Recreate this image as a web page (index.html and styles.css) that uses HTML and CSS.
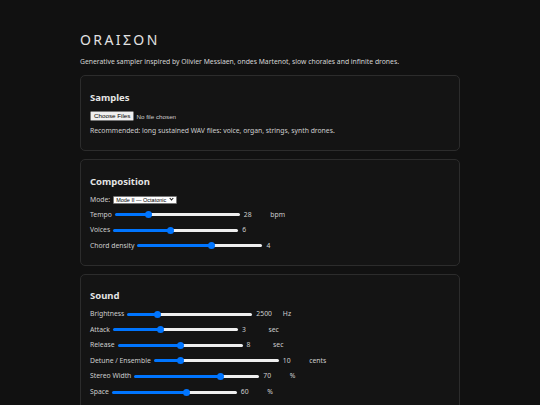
FILE: index.html
```html
<!DOCTYPE html>
<html>
    <head>
        <meta charset="utf-8">
        <title>Oraison</title>
        <link rel="stylesheet" href="styles.css">
    </head>
    <body>
        <div id="main-cont">
            <h1 id="title">ORAIΣON</h1>
            <p class="lead">Generative sampler inspired by Olivier Messiaen, ondes Martenot, slow chorales and infinite drones.</p>

            <div class="card">
                <h2>Samples</h2>
                <div class="rows samples">
                    <input type="file" id="files" multiple accept=".wav">
                    <p class="text">Recommended: long sustained WAV files: voice, organ, strings, synth drones.</p>
                </div>
            </div>

            <div class="card">
                <h2>Composition</h2>
                <div class="rows">
                    <div class="row">
                        <label for="mode">Mode:</label>
                        <span class="select">
                            <select id="mode">
                                <option>Mode II — Octatonic</option>
                                <option>Mode III</option>
                                <option>Mode VII</option>
                            </select>
                        </span>
                    </div>
                    <div class="row">
                        <label>Tempo</label>
                        <input type="range" min="10" max="80" value="28" style="--p: 27.1%">
                        <span class="val">28</span>
                        <span class="unit">bpm</span>
                    </div>
                    <div class="row">
                        <label>Voices</label>
                        <input type="range" min="1" max="12" value="6" style="--p: 45.7%">
                        <span class="val">6</span>
                    </div>
                    <div class="row">
                        <label>Chord density</label>
                        <input type="range" min="1" max="6" value="4" style="--p: 59.4%">
                        <span class="val">4</span>
                    </div>
                </div>
            </div>

            <div class="card">
                <h2>Sound</h2>
                <div class="rows sound">
                    <div class="row">
                        <label>Brightness</label>
                        <input type="range" min="500" max="9500" value="2500" style="--p: 23.8%">
                        <span class="val">2500</span>
                        <span class="unit">Hz</span>
                    </div>
                    <div class="row">
                        <label>Attack</label>
                        <input type="range" min="0" max="8" value="3" style="--p: 38.2%">
                        <span class="val">3</span>
                        <span class="unit">sec</span>
                    </div>
                    <div class="row">
                        <label>Release</label>
                        <input type="range" min="0" max="16" value="8" style="--p: 50%">
                        <span class="val">8</span>
                        <span class="unit">sec</span>
                    </div>
                    <div class="row">
                        <label>Detune / Ensemble</label>
                        <input type="range" min="0" max="50" value="10" style="--p: 21.7%">
                        <span class="val">10</span>
                        <span class="unit">cents</span>
                    </div>
                    <div class="row">
                        <label>Stereo Width</label>
                        <input type="range" min="0" max="100" value="70" style="--p: 68.9%">
                        <span class="val">70</span>
                        <span class="unit">%</span>
                    </div>
                    <div class="row">
                        <label>Space</label>
                        <input type="range" min="0" max="100" value="60" style="--p: 59.4%">
                        <span class="val">60</span>
                        <span class="unit">%</span>
                    </div>
                </div>
            </div>
        </div>
    </body>
</html>
```

FILE: styles.css
```css
body {
    background-color: #111111;
    margin: 0px;
    padding: 0px;
    color: #cfcfcf;
    font-family: "Noto Sans", "Open Sans", sans-serif;
}
#main-cont {
    width: 380px;
    margin: 0px auto;
    padding-top: 30px;
}
#title {
    margin: 0px;
    font-family: "Noto Sans", "Open Sans", sans-serif;
    font-size: 14px;
    line-height: 20px;
    font-weight: 400;
    letter-spacing: 2.4px;
    color: #e2e2e2;
}
.lead {
    margin: 7px 0px 8px;
    font-size: 6.8px;
    line-height: 10px;
    color: #d6d6d6;
}
.card {
    border: solid 1px #2c2c2c;
    border-radius: 5px;
    background-color: #141414;
    padding: 14.5px 9px 14px;
    margin-bottom: 8px;
}
h2 {
    margin: 0px 0px 7px;
    font-size: 9.5px;
    line-height: 13px;
    font-weight: bold;
    color: #e4e4e4;
}
.rows {
    display: flex;
    flex-direction: column;
    align-items: flex-start;
    gap: 5.3px;
}
.samples {
    gap: 5.7px;
}
.sound {
    gap: 5.6px;
}
.text {
    margin: 0px;
    font-size: 6.8px;
    line-height: 10px;
}
.row {
    display: flex;
    align-items: center;
    height: 10px;
    font-size: 6.8px;
    line-height: 10px;
}
#files {
    zoom: 0.5;
    font-family: "Liberation Sans", sans-serif;
    font-size: 12.5px;
    color: #d0d0d0;
}
.select {
    position: relative;
    display: inline-flex;
    margin-left: 3px;
}
.select::after {
    content: "";
    position: absolute;
    right: 4px;
    top: 1.5px;
    width: 2px;
    height: 2px;
    border-right: solid 1px #111;
    border-bottom: solid 1px #111;
    transform: rotate(45deg);
    pointer-events: none;
}
#mode {
    -webkit-appearance: none;
    appearance: none;
    width: 64px;
    height: 8px;
    padding: 0px 0px 0px 2px;
    border: solid 1px #767676;
    border-radius: 1px;
    background-color: #ffffff;
    color: #000000;
    font-family: "Liberation Sans", sans-serif;
    font-size: 5.5px;
    line-height: 6px;
}
input[type=range] {
    -webkit-appearance: none;
    appearance: none;
    width: 125px;
    height: 8px;
    margin: 0px 4px 0px 3px;
    background: transparent;
}
input[type=range]::-webkit-slider-runnable-track {
    height: 3px;
    border-radius: 2px;
    background: linear-gradient(to right, #0075ff var(--p), #efefef var(--p));
}
input[type=range]::-webkit-slider-thumb {
    -webkit-appearance: none;
    width: 7px;
    height: 7px;
    margin-top: -2px;
    border-radius: 50%;
    background-color: #0075ff;
}
.val {
    width: 26.5px;
}
```
